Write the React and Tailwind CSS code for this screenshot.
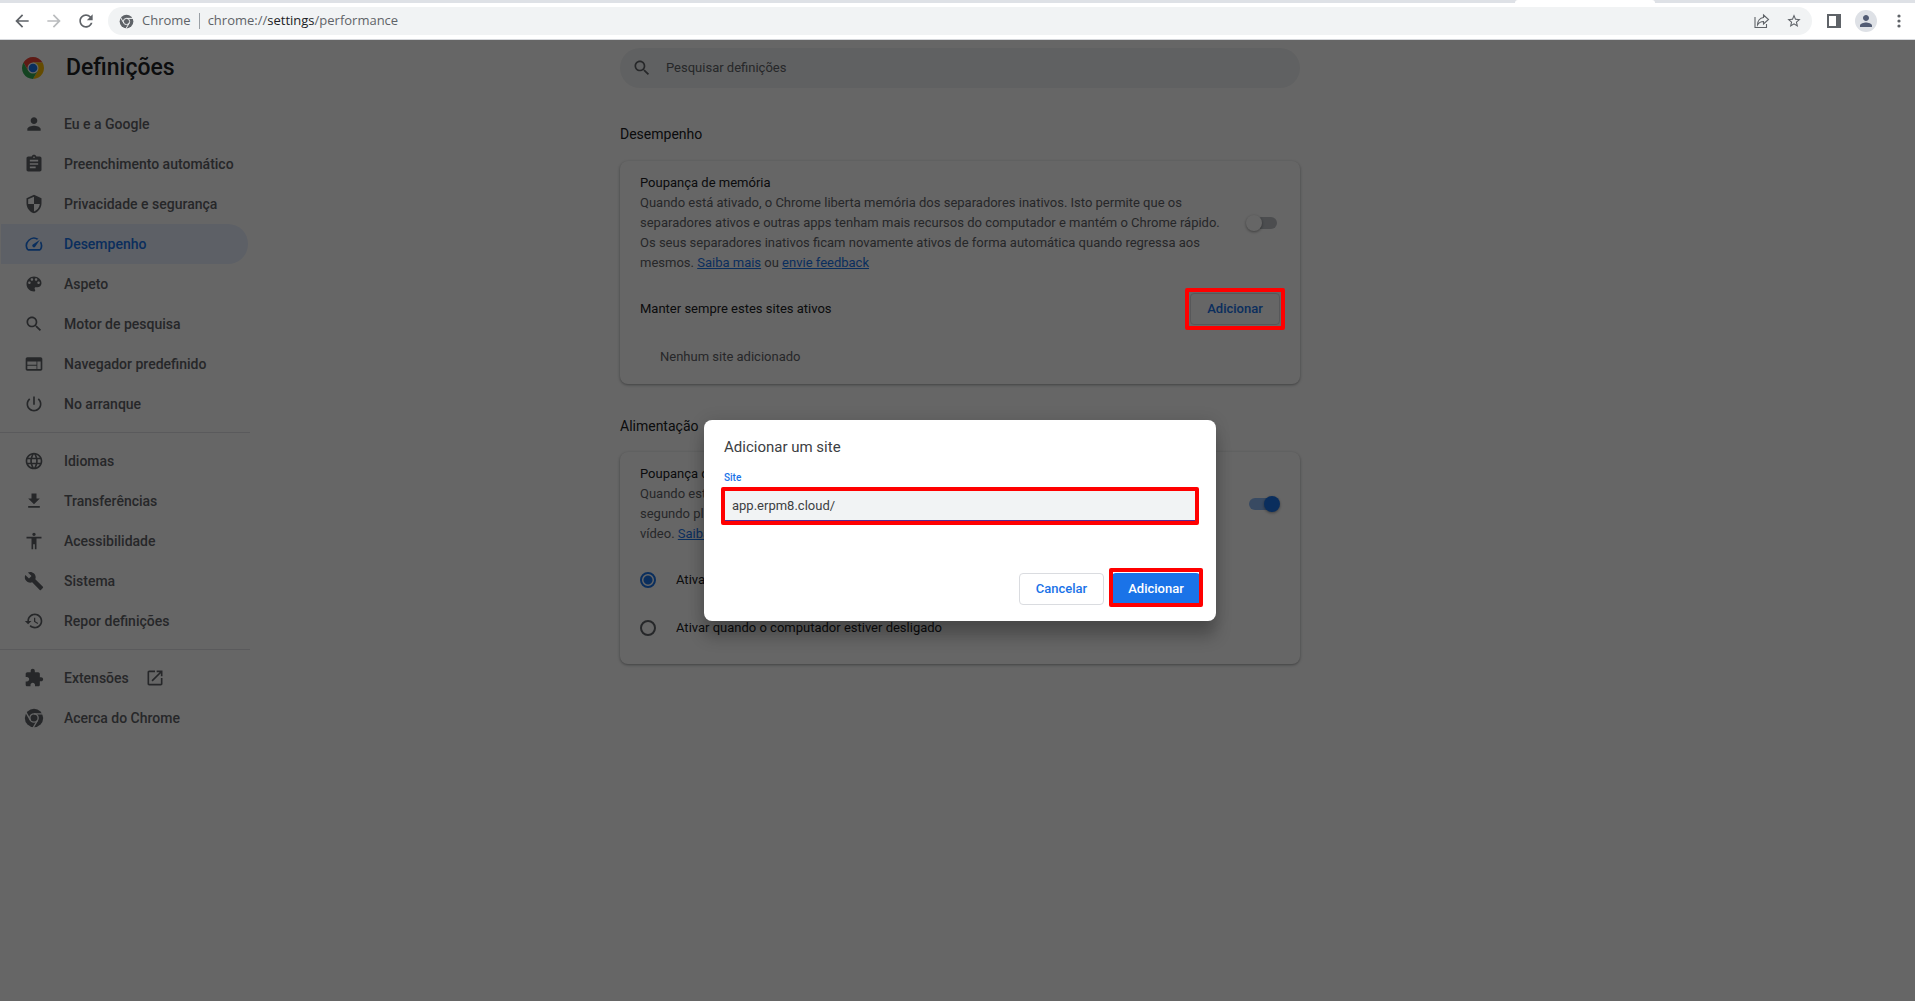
import { useState } from "react";

const P = {
  person: "M12 12c2.21 0 4-1.79 4-4s-1.79-4-4-4-4 1.79-4 4 1.79 4 4 4zm0 2c-2.67 0-8 1.34-8 4v2h16v-2c0-2.66-5.33-4-8-4z",
  assignment: "M19 3h-4.18C14.4 1.84 13.3 1 12 1c-1.3 0-2.4.84-2.82 2H5c-1.1 0-2 .9-2 2v14c0 1.1.9 2 2 2h14c1.1 0 2-.9 2-2V5c0-1.1-.9-2-2-2zm-7 0c.55 0 1 .45 1 1s-.45 1-1 1-1-.45-1-1 .45-1 1-1zm2 14H7v-2h7v2zm3-4H7v-2h10v2zm0-4H7V7h10v2z",
  shield: "M12 1L3 5v6c0 5.55 3.84 10.74 9 12 5.16-1.26 9-6.45 9-12V5l-9-4zm0 10.99h7c-.53 4.12-3.28 7.79-7 8.94V12H5V6.3l7-3.11v8.8z",
  speed: "M20.38 8.57l-1.23 1.85a8 8 0 0 1-.22 7.58H5.07A8 8 0 0 1 15.58 6.85l1.85-1.23A10 10 0 0 0 3.35 19a2 2 0 0 0 1.72 1h13.85a2 2 0 0 0 1.74-1 10 10 0 0 0-.27-10.44zm-9.79 6.84a2 2 0 0 0 2.83 0l5.66-8.49-8.49 5.66a2 2 0 0 0 0 2.83z",
  palette: "M12 3c-4.97 0-9 4.03-9 9s4.03 9 9 9c.83 0 1.5-.67 1.5-1.5 0-.39-.15-.74-.39-1.01-.23-.26-.38-.61-.38-.99 0-.83.67-1.5 1.5-1.5H16c2.76 0 5-2.24 5-5 0-4.42-4.03-8-9-8zm-5.5 9c-.83 0-1.5-.67-1.5-1.5S5.67 9 6.5 9 8 9.67 8 10.5 7.33 12 6.5 12zm3-4C8.67 8 8 7.33 8 6.5S8.67 5 9.5 5s1.5.67 1.5 1.5S10.33 8 9.5 8zm5 0c-.83 0-1.5-.67-1.5-1.5S13.67 5 14.5 5s1.5.67 1.5 1.5S15.33 8 14.5 8zm3 4c-.83 0-1.5-.67-1.5-1.5S16.67 9 17.5 9s1.5.67 1.5 1.5-.67 1.5-1.5 1.5z",
  search: "M15.5 14h-.79l-.28-.27C15.41 12.59 16 11.11 16 9.5 16 5.91 13.09 3 9.5 3S3 5.91 3 9.5 5.91 16 9.5 16c1.61 0 3.09-.59 4.23-1.57l.27.28v.79l5 4.99L20.49 19l-4.99-5zm-6 0C7.01 14 5 11.99 5 9.5S7.01 5 9.5 5 14 7.01 14 9.5 11.99 14 9.5 14z",
  web: "M20 4H4c-1.1 0-1.99.9-1.99 2L2 18c0 1.1.9 2 2 2h16c1.1 0 2-.9 2-2V6c0-1.1-.9-2-2-2zm-5 14H4v-4h11v4zm0-5H4V9h11v4zm5 5h-4V9h4v9z",
  power: "M13 3h-2v10h2V3zm4.83 2.17l-1.42 1.42C17.99 7.86 19 9.81 19 12c0 3.87-3.13 7-7 7s-7-3.13-7-7c0-2.19 1.01-4.14 2.58-5.42L6.17 5.17C4.23 6.82 3 9.26 3 12c0 4.97 4.03 9 9 9s9-4.03 9-9c0-2.74-1.23-5.18-3.17-6.83z",
  language: "M11.99 2C6.47 2 2 6.48 2 12s4.47 10 9.99 10C17.52 22 22 17.52 22 12S17.52 2 11.99 2zm6.93 6h-2.95c-.32-1.25-.78-2.45-1.38-3.56 1.84.63 3.37 1.91 4.33 3.56zM12 4.04c.83 1.2 1.48 2.53 1.91 3.96h-3.82c.43-1.43 1.08-2.76 1.91-3.96zM4.26 14C4.1 13.36 4 12.69 4 12s.1-1.36.26-2h3.38c-.08.66-.14 1.32-.14 2s.06 1.34.14 2H4.26zm.82 2h2.95c.32 1.25.78 2.45 1.38 3.56-1.84-.63-3.37-1.9-4.33-3.56zm2.95-8H5.08c.96-1.66 2.49-2.93 4.33-3.56C8.81 5.55 8.35 6.75 8.03 8zM12 19.96c-.83-1.2-1.48-2.53-1.91-3.96h3.82c-.43 1.43-1.08 2.76-1.91 3.96zM14.34 14H9.66c-.09-.66-.16-1.32-.16-2s.07-1.35.16-2h4.68c.09.65.16 1.32.16 2s-.07 1.34-.16 2zm.25 5.56c.6-1.11 1.06-2.31 1.38-3.56h2.95c-.96 1.65-2.49 2.93-4.33 3.56zM16.36 14c.08-.66.14-1.32.14-2s-.06-1.34-.14-2h3.38c.16.64.26 1.31.26 2s-.1 1.36-.26 2h-3.38z",
  download: "M19 9h-4V3H9v6H5l7 7 7-7zM5 18v2h14v-2H5z",
  accessibility: "M12 2c1.1 0 2 .9 2 2s-.9 2-2 2-2-.9-2-2 .9-2 2-2zm9 7h-6v13h-2v-6h-2v6H9V9H3V7h18v2z",
  wrench: "M22.7 19l-9.1-9.1c.9-2.3.4-5-1.5-6.9-2-2-5-2.4-7.4-1.3L9 6 6 9 1.6 4.7C.4 7.1.9 10.1 2.9 12.1c1.9 1.9 4.6 2.4 6.9 1.5l9.1 9.1c.4.4 1 .4 1.4 0l2.3-2.3c.5-.4.5-1.1.1-1.4z",
  restore: "M13 3c-4.97 0-9 4.03-9 9H1l3.89 3.89.07.14L9 12H6c0-3.87 3.13-7 7-7s7 3.13 7 7-3.13 7-7 7c-1.93 0-3.68-.79-4.94-2.06l-1.42 1.42C8.27 19.99 10.51 21 13 21c4.97 0 9-4.03 9-9s-4.03-9-9-9zm-1 5v5l4.28 2.54.72-1.21-3.5-2.08V8H12z",
  extension: "M20.5 11H19V7c0-1.1-.9-2-2-2h-4V3.5C13 2.12 11.88 1 10.5 1S8 2.12 8 3.5V5H4c-1.1 0-1.99.9-1.99 2v3.8H3.5c1.49 0 2.7 1.21 2.7 2.7s-1.21 2.7-2.7 2.7H2V20c0 1.1.9 2 2 2h3.8v-1.5c0-1.49 1.21-2.7 2.7-2.7 1.49 0 2.7 1.21 2.7 2.7V22H17c1.1 0 2-.9 2-2v-4h1.5c1.38 0 2.5-1.12 2.5-2.5S21.88 11 20.5 11z",
  open: "M19 19H5V5h7V3H5c-1.11 0-2 .9-2 2v14c0 1.1.89 2 2 2h14c1.1 0 2-.9 2-2v-7h-2v7zM14 3v2h3.59l-9.83 9.83 1.41 1.41L19 6.41V10h2V3h-7z",
  back: "M20 11H7.83l5.59-5.59L12 4l-8 8 8 8 1.41-1.41L7.83 13H20v-2z",
  forward: "M12 4l-1.41 1.41L16.17 11H4v2h12.17l-5.58 5.59L12 20l8-8z",
  reload: "M17.65 6.35C16.2 4.9 14.21 4 12 4c-4.42 0-7.99 3.58-7.99 8s3.57 8 7.99 8c3.73 0 6.84-2.55 7.73-6h-2.08c-.82 2.33-3.04 4-5.65 4-3.31 0-6-2.69-6-6s2.69-6 6-6c1.66 0 3.14.69 4.22 1.78L13 11h7V4l-2.35 2.35z",
  star: "M22 9.24l-7.19-.62L12 2 9.19 8.63 2 9.24l5.46 4.73L5.82 21 12 17.27 18.18 21l-1.63-7.03L22 9.24zM12 15.4l-3.76 2.27 1-4.28-3.32-2.88 4.38-.38L12 6.1l1.71 4.04 4.38.38-3.32 2.88 1 4.28L12 15.4z",
};

function Icon({ d, className = "size-5" }) {
  return (
    <svg viewBox="0 0 24 24" fill="currentColor" aria-hidden="true" className={`shrink-0 ${className}`}>
      <path d={d} />
    </svg>
  );
}

function ChromeMono({ className = "size-5" }) {
  return (
    <svg viewBox="0 0 24 24" aria-hidden="true" className={`shrink-0 ${className}`}>
      <circle cx="12" cy="12" r="11" fill="currentColor" />
      <g stroke="var(--gap)" strokeWidth="1.6" fill="none">
        <circle cx="12" cy="12" r="5" />
        <path d="M12 7h11M7.67 14.5L2.2 5M16.33 14.5L10.8 24" />
      </g>
    </svg>
  );
}

function ChromeLogo() {
  return (
    <svg viewBox="0 0 48 48" aria-hidden="true" className="size-6 shrink-0">
      <path d="M4.95 13A22 22 0 0 1 43.05 13H24L14.5 29.5z" fill="#ea4335" />
      <path d="M24 13H43.05A22 22 0 0 1 24 46L33.5 29.5z" fill="#fbbc04" />
      <path d="M4.95 13A22 22 0 0 0 24 46L33.5 29.5H14.5z" fill="#34a853" />
      <circle cx="24" cy="24" r="11" fill="#fff" />
      <circle cx="24" cy="24" r="8.7" fill="#1a73e8" />
    </svg>
  );
}

const groups = [
  [
    ["Eu e a Google", "person"],
    ["Preenchimento automático", "assignment"],
    ["Privacidade e segurança", "shield"],
    ["Desempenho", "speed"],
    ["Aspeto", "palette"],
    ["Motor de pesquisa", "search"],
    ["Navegador predefinido", "web"],
    ["No arranque", "power"],
  ],
  [
    ["Idiomas", "language"],
    ["Transferências", "download"],
    ["Acessibilidade", "accessibility"],
    ["Sistema", "wrench"],
    ["Repor definições", "restore"],
  ],
  [
    ["Extensões", "extension"],
    ["Acerca do Chrome", "chrome"],
  ],
];

function Toolbar() {
  return (
    <header className="border-b border-[#d5d7db] bg-white font-['Open_Sans',sans-serif] text-[#5f6368]">
      <div className="flex h-[3px] bg-[#dee1e6]">
        <div className="ml-auto mr-[260px] w-[140px] rounded-t-sm bg-white" />
      </div>
      <div className="flex h-9 items-center pl-3 pr-2">
        <button aria-label="Anterior"><Icon d={P.back} /></button>
        <button aria-label="Seguinte" className="ml-3 text-[#babcbe]"><Icon d={P.forward} /></button>
        <button aria-label="Atualizar" className="ml-3"><Icon d={P.reload} /></button>
        <div className="ml-3 flex h-7 flex-1 items-center rounded-full bg-[#f1f3f4] pl-[11px] pr-[10px] text-[13px] [--gap:#f1f3f4]">
          <ChromeMono className="size-[15px]" />
          <span className="ml-2">Chrome</span>
          <span className="mx-2 h-4 w-px bg-[#9aa0a6]" />
          <span>chrome://<span className="text-[#202124]">settings</span>/performance</span>
          <span className="flex-1" />
          <button aria-label="Partilhar">
            <svg viewBox="0 0 16 16" fill="none" stroke="currentColor" strokeWidth="1.1" className="size-4" aria-hidden="true">
              <path d="M1 4v10.5h11.5V11M9.500 2l5 4.500-5 4.500V8.500C7 8.500 5 9.500 3.500 12 3.500 8 6 5 9.500 4.500z" />
            </svg>
          </button>
          <button aria-label="Adicionar aos marcadores" className="ml-4"><Icon d={P.star} className="size-4" /></button>
        </div>
        <button aria-label="Painel lateral" className="ml-[15px]">
          <svg viewBox="0 0 14 14" className="size-[14px]" aria-hidden="true">
            <path fill="currentColor" fillRule="evenodd" d="M0 0h14v14H0zM2 2v10h7V2z" />
          </svg>
        </button>
        <button aria-label="Perfil" className="ml-[14px] flex size-[22px] items-center justify-center rounded-full bg-[#dee1e6] text-[#525c74]">
          <Icon d={P.person} className="size-[18px]" />
        </button>
        <button aria-label="Mais" className="ml-[14px]">
          <svg viewBox="0 0 16 16" className="size-4" fill="currentColor" aria-hidden="true">
            <circle cx="8" cy="3" r="1.600" /><circle cx="8" cy="8" r="1.600" /><circle cx="8" cy="13" r="1.600" />
          </svg>
        </button>
      </div>
    </header>
  );
}

function Sidebar() {
  return (
    <aside className="w-[250px] shrink-0 text-[#5f6368]">
      <div className="flex h-14 items-center pl-[21px]">
        <ChromeLogo />
        <h1 className="ml-[21px] text-[23px] font-medium text-[#202124]">Definições</h1>
      </div>
      <nav className="pt-2 text-sm font-medium [--gap:#fff]">
        {groups.map((items, g) => (
          <div key={g} className={g ? "mt-2 border-t border-[#e0e2e5] pt-2" : ""}>
            {items.map(([label, icon]) => (
              <a
                key={label}
                href="#"
                aria-current={icon === "speed" ? "page" : undefined}
                className={`ml-px mr-0.5 flex h-10 items-center rounded-r-full pl-[23px] ${icon === "speed" ? "bg-[#e8f0fe] text-[#1a73e8]" : ""}`}
              >
                {icon === "chrome" ? <ChromeMono /> : <Icon d={P[icon]} />}
                <span className="ml-5">{label}</span>
                {icon === "extension" && <Icon d={P.open} className="ml-4 size-5" />}
              </a>
            ))}
          </div>
        ))}
      </nav>
    </aside>
  );
}

function Toggle({ label, defaultChecked }) {
  return (
    <label className="relative flex h-4 w-[34px] shrink-0 items-center px-[3px]">
      <input type="checkbox" role="switch" aria-label={label} defaultChecked={defaultChecked} className="peer sr-only" />
      <span className="h-3 w-full rounded-full bg-[#bdc1c6] peer-checked:bg-[#8db9f4]" />
      <span className="absolute left-0 top-0 size-4 rounded-full bg-white shadow-[0_1px_3px_rgba(0,0,0,0.4)] peer-checked:left-[18px] peer-checked:bg-[#1a73e8]" />
    </label>
  );
}

const card = "rounded-lg bg-white px-5 shadow-[0_1px_2px_rgba(60,64,67,0.3),0_1px_3px_1px_rgba(60,64,67,0.15)]";
const link = "text-[#1a73e8] underline";

function Radio({ label, defaultChecked }) {
  return (
    <label className="flex h-12 items-center gap-5">
      <input
        type="radio"
        name="poupanca-energia"
        defaultChecked={defaultChecked}
        className="size-4 appearance-none rounded-full border-2 border-[#5f6368] checked:border-[#1a73e8] checked:bg-[radial-gradient(circle,#1a73e8_4px,transparent_5px)]"
      />
      {label}
    </label>
  );
}

function Content() {
  return (
    <main className="w-[680px] text-[13px] leading-5 text-[#202124]">
      <label className="mt-2 flex h-10 items-center rounded-full bg-[#f1f3f4] pl-3 text-[#5f6368]">
        <Icon d={P.search} />
        <input type="search" aria-label="Pesquisar definições" placeholder="Pesquisar definições" className="ml-[14px] flex-1 bg-transparent outline-none placeholder:text-[#5f6368]" />
      </label>
      <h2 className="mb-[17px] mt-9 text-sm">Desempenho</h2>
      <section className={`${card} pb-[3px]`}>
        <div className="flex items-center justify-between py-3">
          <div className="w-[584px]">
            <h3>Poupança de memória</h3>
            <p className="text-[#5f6368]">
              Quando está ativado, o Chrome liberta memória dos separadores inativos. Isto permite que os separadores ativos e outras apps tenham mais recursos do computador e mantém o Chrome rápido. Os seus separadores inativos ficam novamente ativos de forma automática quando regressa aos mesmos. <a href="#" className={link}>Saiba mais</a> ou <a href="#" className={link}>envie feedback</a>
            </p>
          </div>
          <Toggle label="Poupança de memória" />
        </div>
        <div className="flex h-12 items-center justify-between">
          <h3>Manter sempre estes sites ativos</h3>
          <div className="relative">
            <button className="block h-8 w-[90px] rounded border border-[#dadce0] font-medium text-[#1a73e8]">Adicionar</button>
            <span className="pointer-events-none absolute -inset-[5px] z-10 rounded-xs border-4 border-[#f00]" />
          </div>
        </div>
        <p className="flex h-12 items-center pl-5 text-[#5f6368]">Nenhum site adicionado</p>
      </section>
      <h2 className="mb-4 mt-8 text-sm">Alimentação</h2>
      <section className={`${card} py-3`}>
        <div className="mb-3 flex items-center justify-between">
          <div className="w-[584px]">
            <h3>Poupança de energia</h3>
            <p className="text-[#5f6368]">
              Quando está ativado, o Chrome poupa energia da bateria ao limitar a atividade em<br />
              segundo plano e os efeitos visuais, tais como o deslocamento suave e as taxas de<br />
              vídeo. <a href="#" className={link}>Saiba mais</a>
            </p>
          </div>
          <Toggle label="Poupança de energia" defaultChecked />
        </div>
        <Radio label="Ativar apenas com a bateria fraca" defaultChecked />
        <Radio label="Ativar quando o computador estiver desligado" />
      </section>
    </main>
  );
}

function AddSiteDialog() {
  const [site, setSite] = useState("app.erpm8.cloud/");
  return (
    <div role="dialog" aria-labelledby="titulo" className="w-[512px] rounded-lg bg-white pb-4 pl-5 pr-4 pt-[17px] text-[13px] shadow-[0_0_16px_rgba(0,0,0,0.12),0_16px_16px_rgba(0,0,0,0.24)]">
      <h2 id="titulo" className="text-[15px] leading-5 text-[#3c4043]">Adicionar um site</h2>
      <label htmlFor="site" className="mt-[13px] block text-[10px] font-medium leading-4 text-[#1a73e8]">Site</label>
      <div className="-ml-[3px] mr-px mt-px rounded-xs border-4 border-[#f00]">
        <input id="site" value={site} onChange={(e) => setSite(e.target.value)} className="block h-[30px] w-full border-b border-[#5a2a90] bg-[#f1f3f4] px-[7px] text-[#3c4043] outline-none" />
      </div>
      <div className="mt-12 flex justify-end gap-2 font-medium">
        <button className="h-8 w-[85px] rounded border border-[#dadce0] text-[#1a73e8]">Cancelar</button>
        <div className="relative">
          <button className="block h-8 w-[88px] rounded bg-[#1a73e8] text-white">Adicionar</button>
          <span className="pointer-events-none absolute -inset-x-[3px] -bottom-0.5 -top-[5px] rounded-xs border-4 border-[#f00]" />
        </div>
      </div>
    </div>
  );
}

export default function App() {
  return (
    <div className="flex min-h-screen flex-col bg-white font-['Roboto',sans-serif]">
      <Toolbar />
      <div className="relative flex-1">
        <div className="flex">
          <Sidebar />
          <div className="-ml-[245px] flex flex-1 justify-center">
            <Content />
          </div>
        </div>
        <div className="absolute inset-0 flex items-start justify-center bg-black/60 pl-[5px] pt-[380px]">
          <AddSiteDialog />
        </div>
      </div>
    </div>
  );
}
